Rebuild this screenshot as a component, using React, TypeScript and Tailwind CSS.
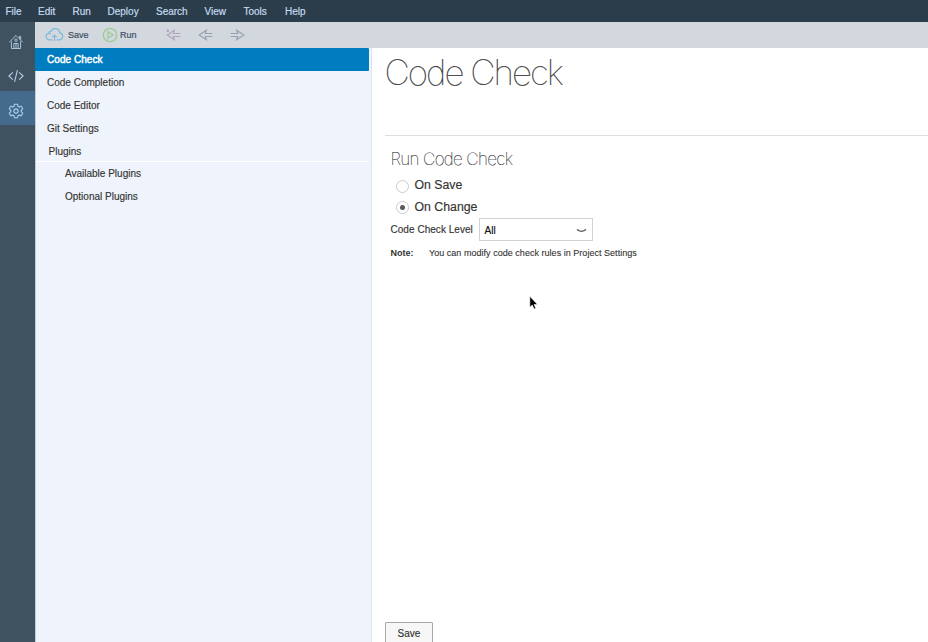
import React from "react";

const menu = [
  { label: "File", width: "w-[32.5px]" },
  { label: "Edit", width: "w-[34.5px]" },
  { label: "Run", width: "w-[35px]" },
  { label: "Deploy", width: "w-[48.5px]" },
  { label: "Search", width: "w-[48.5px]" },
  { label: "View", width: "w-[39px]" },
  { label: "Tools", width: "w-[41.5px]" },
  { label: "Help", width: "w-[40px]" },
];

function MenuBar() {
  return (
    <nav className="flex h-[22px] shrink-0 items-center bg-[#2b3c4a] pt-px pl-[5.5px] text-[10px] text-[#c3daee]">
      {menu.map((m) => (
        <span key={m.label} className={`${m.width} leading-[22px] [-webkit-text-stroke:0.2px_#c3daee]`}>
          {m.label}
        </span>
      ))}
    </nav>
  );
}

function HomeIcon() {
  return (
    <svg width="16" height="16" viewBox="0 0 16 16" fill="none" stroke="#b4cfe4" strokeWidth="0.9">
      <path d="M1.2 8.3 8 1.5l6.8 6.8M3.4 7.2v7.3h9.2V7.2M11.4 4.6V2.4h1.3v3.5" />
      <path d="M5.9 14.3V9.5h4.2v4.8M8 9.5v4.8" />
      <circle cx="8" cy="6.2" r="1.2" />
    </svg>
  );
}

function CodeIcon() {
  return (
    <svg width="16" height="14" viewBox="0 0 16 14" fill="none" stroke="#b4cfe4" strokeWidth="1.1">
      <path d="M4.8 3.4.9 7l3.9 3.6M11.2 3.4 15.1 7l-3.9 3.6M9.4 1.2l-2.8 11.6" />
    </svg>
  );
}

function GearIcon() {
  return (
    <svg width="16" height="16" viewBox="0 0 16 16" fill="none" stroke="#a5d0ee" strokeWidth="1.1" strokeLinejoin="round">
      <path d="M6.5 1.2h3l.5 2 1.2.7 2.1-.6 1.4 2.5-1.5 1.5v1.4l1.5 1.5-1.4 2.5-2.1-.6-1.2.7-.5 2h-3l-.5-2-1.2-.7-2.1.6-1.4-2.5 1.5-1.5V7.3L1.3 5.8l1.4-2.5 2.1.6L6 3.2z" />
      <circle cx="8" cy="8" r="2.1" />
    </svg>
  );
}

function ActivityBar() {
  return (
    <aside className="flex w-[35px] shrink-0 flex-col bg-[#3f5260]">
      <div className="flex h-[35px] items-center justify-center pt-[5px] pr-[4px]">
        <HomeIcon />
      </div>
      <div className="flex h-[34px] items-center justify-center pt-[4px] pr-[4px]">
        <CodeIcon />
      </div>
      <div className="flex h-[34px] items-center justify-center bg-[#446b8b] pt-[5px] pr-[4px]">
        <GearIcon />
      </div>
    </aside>
  );
}

function Arrow({ color, flip, star }: { color: string; flip?: boolean; star?: boolean }) {
  return (
    <svg width="15" height="12" viewBox="0 0 15 12" fill="none" stroke={color} strokeWidth="1.15">
      <path
        transform={flip ? "translate(15 0) scale(-1 1)" : undefined}
        d="M14.3 4.5H7.3L8.3 1.3 1.2 6l7.1 4.7-1-3.2h7"
      />
      {star && <circle cx="1.8" cy="1.7" r="1.3" fill={color} stroke="none" />}
    </svg>
  );
}

function Toolbar() {
  return (
    <div className="flex h-[26px] shrink-0 items-center bg-[#d3d7de] pl-[10px] text-[9px] text-[#3f5064]">
      <svg width="19" height="14" viewBox="0 0 19 14" fill="none" stroke="#7dbbdc" strokeWidth="1.2">
        <path d="M7.5 11.8H4.2a3.3 3.3 0 0 1-.6-6.5 2.3 2.3 0 0 1 2.6-2.1 4.4 4.4 0 0 1 8.4 1.5 3.6 3.6 0 0 1 .2 7.1h-3.3M9.5 13V7.2M7.4 9.2l2.1-2.1 2.1 2.1M3.6 5.3c.9-.1 1.7.1 2.3.7" />
      </svg>
      <span className="ml-[4px] w-[34px] pt-[2px] [-webkit-text-stroke:0.2px_#3f5064]">Save</span>
      <svg width="16" height="16" viewBox="0 0 16 16" fill="none" stroke="#9bcd93" strokeWidth="1.3">
        <circle cx="8" cy="8" r="6.7" />
        <path d="M6 4.7 11 8l-5 3.3z" />
      </svg>
      <span className="ml-[2px] w-[45.5px] pt-[2px] [-webkit-text-stroke:0.2px_#3f5064]">Run</span>
      <Arrow color="#b3a3bd" star />
      <span className="w-[17px]" />
      <Arrow color="#98a2ae" />
      <span className="w-[17px]" />
      <Arrow color="#98a2ae" flip />
    </div>
  );
}

function Sidebar() {
  return (
    <div className="flex w-[337px] shrink-0 flex-col border-r border-l border-r-[#e0e5ec] border-l-[#c3cdda] bg-[#eff3fb] pr-[2px] text-[10px] leading-[23px] text-[#333333] [-webkit-text-stroke:0.15px_#333333]">
      <div className="-ml-px h-[23px] rounded-r-[1px] bg-[#007cc0] pl-[12px] text-white [-webkit-text-stroke:0.45px_#ffffff]">
        <span className="tracking-[0.05px]">Code Check</span>
      </div>
      <div className="h-[23px] pl-[11px]">Code Completion</div>
      <div className="h-[23px] pl-[11px]">Code Editor</div>
      <div className="h-[23px] pl-[11px]">Git Settings</div>
      <div className="h-[22px] border-b border-white pl-[12.5px]">Plugins</div>
      <div className="h-[23px] pl-[29px]">Available Plugins</div>
      <div className="h-[23px] pl-[29px]">Optional Plugins</div>
    </div>
  );
}

function Radio({ checked }: { checked?: boolean }) {
  return (
    <span className="mt-px flex size-[13px] items-center justify-center rounded-full border border-[#cccccc] bg-white">
      {checked && <span className="size-[5px] rounded-full bg-[#5a5a5a]" />}
    </span>
  );
}

function Settings() {
  return (
    <main className="flex min-w-0 flex-1 flex-col bg-white text-[#333333]">
      <header className="ml-[12.5px] h-[88px] border-b border-[#dedede]">
        <h1 className="pt-[2px] font-[Inter,sans-serif] text-[35px] leading-[44px] font-thin tracking-[-2px] whitespace-nowrap [-webkit-text-stroke:0.2px_#333333]">
          Code Check
        </h1>
      </header>
      <section className="flex flex-1 flex-col pl-[18.5px]">
        <h2 className="mt-[11px] h-[24px] font-[Inter,sans-serif] text-[17px] leading-[24px] font-thin tracking-[-0.65px] whitespace-nowrap [-webkit-text-stroke:0.2px_#444444]">
          Run Code Check
        </h2>
        <label className="mt-[4px] flex h-[21px] items-center gap-[6px] pl-[5px] text-[12.3px] [-webkit-text-stroke:0.15px_#333333]">
          <Radio />
          On Save
        </label>
        <label className="flex h-[22px] items-center gap-[6px] pl-[5px] text-[12.3px] [-webkit-text-stroke:0.15px_#333333]">
          <Radio checked />
          On Change
        </label>
        <div className="flex h-[23px] text-[10px] leading-[23px] [-webkit-text-stroke:0.15px_#333333]">
          <span className="w-[88px] tracking-[0.04px]">Code Check Level</span>
          <div className="flex h-[23px] w-[114.5px] items-center justify-between border border-[#d2d2d2] pr-[5px] pl-[5px] text-black">
            <span className="pt-px">All</span>
            <svg width="11" height="6" viewBox="0 0 11 6" fill="none" stroke="#555" strokeWidth="1.5">
              <path d="M1 2.5c2.6 2.2 6.4 2.2 9 0" />
            </svg>
          </div>
        </div>
        <p className="mt-[2px] flex text-[9px] leading-[20px]">
          <b className="w-[38.5px]">Note:</b>
          <span className="tracking-[0.03px] [-webkit-text-stroke:0.1px_#333333]">You can modify code check rules in Project Settings</span>
        </p>
      </section>
      <footer className="flex h-[20px] items-start overflow-hidden pl-[13px]">
        <button className="h-[24px] w-[48px] shrink-0 rounded-[1px] border border-[#a9a9a9] bg-[#f7f7f7] pb-px text-[10px] leading-[20px] [-webkit-text-stroke:0.15px_#333333]">
          Save
        </button>
      </footer>
    </main>
  );
}

export default function App() {
  return (
    <div className="relative flex h-[642px] w-[928px] flex-col overflow-hidden font-['Liberation_Sans',Arial,sans-serif]">
      <MenuBar />
      <div className="flex min-h-0 flex-1">
        <ActivityBar />
        <div className="flex min-w-0 flex-1 flex-col">
          <Toolbar />
          <div className="flex min-h-0 flex-1">
            <Sidebar />
            <Settings />
          </div>
        </div>
      </div>
      <svg className="absolute top-[295px] left-[528px]" width="12" height="17" viewBox="0 0 12 17">
        <path d="M1.8 1.3v11l2.5-2.2 1.8 4 1.7-.8L6.1 9.5h3.4z" fill="#000" stroke="#fff" strokeWidth="0.6" />
      </svg>
    </div>
  );
}
